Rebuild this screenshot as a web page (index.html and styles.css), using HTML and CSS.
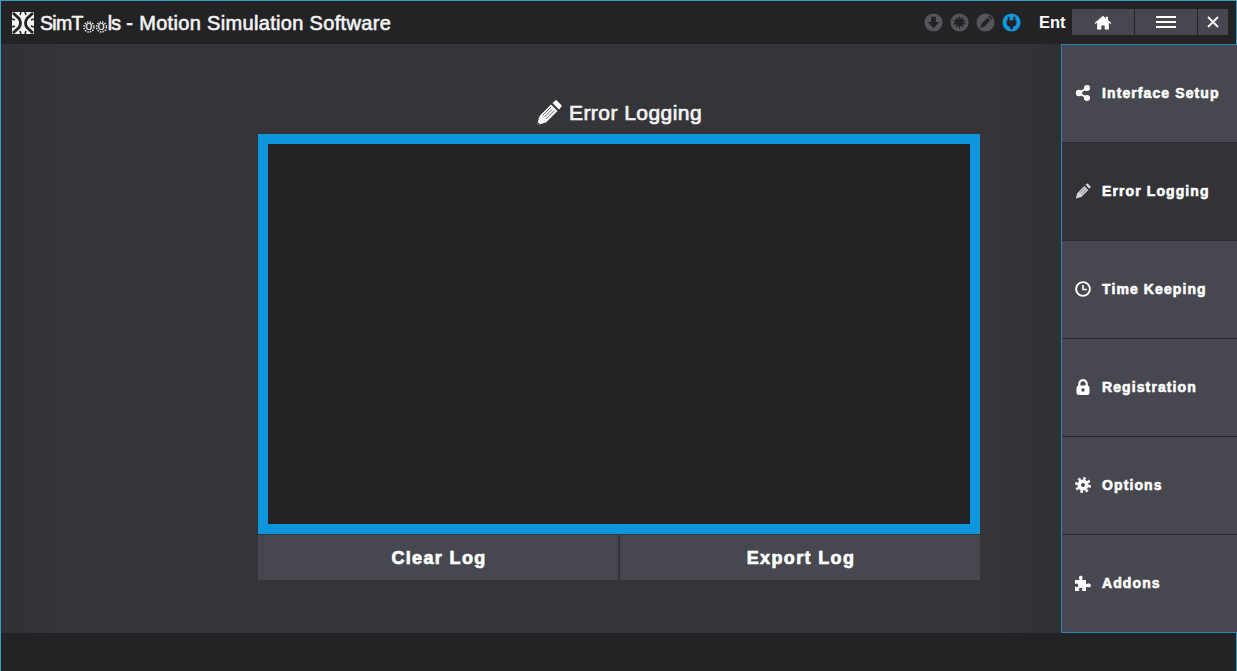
FILE: index.html
```html
<!DOCTYPE html>
<html lang="en">
<head>
<meta charset="utf-8">
<title>SimTools - Motion Simulation Software</title>
<link rel="stylesheet" href="styles.css">
</head>
<body>
<div class="app">
  <header class="titlebar">
    <svg class="logo" viewBox="0 0 22 22"><rect width="22" height="22" rx="1" fill="#f4f4f4"/><path d="M1 1l6 5.500Q10 11 7 15.500L1 21M21 1l-6 5.500Q12 11 15 15.500L21 21" fill="none" stroke="#232325" stroke-width="2.800"/><path d="M3 8l-3-1M3 14l-3 1M19 8l3-1M19 14l3 1M8 3l1-3M14 3l-1-3M8 19l1 3M14 19l-1 3" stroke="#232325" stroke-width="1.600"/></svg>
    <h1 class="app-title"><span class="brand">SimT<span class="gears">oo<svg class="gear-teeth" viewBox="0 0 25 12"><circle cx="6" cy="6" r="5" fill="none" stroke="#f4f4f4" stroke-width="1.500" stroke-dasharray="1.400 1.220"/><circle cx="18.500" cy="6" r="5" fill="none" stroke="#f4f4f4" stroke-width="1.500" stroke-dasharray="1.400 1.220"/></svg></span>ls</span> - Motion Simulation Software</h1>
    <div class="status">
      <svg class="status-icon" viewBox="0 0 20 20"><circle cx="10" cy="10" r="9.500" fill="#55565b"/><path d="M7.500 4h5v5.500H16L10 16 4 9.500h3.500z" fill="#232325"/></svg>
      <svg class="status-icon" viewBox="0 0 20 20"><circle cx="10" cy="10" r="9.500" fill="#55565b"/><path d="M10 3l1.300 3.200L14 4l-.5 3.500L17 7l-2.300 2.500L17 12l-3.300-.2.300 3.700-2.700-2.300L10 17l-1.300-3.800L6 15.500l.3-3.700L3 12l2.300-2.500L3 7l3.500.5L6 4l2.700 2.200z" fill="#232325"/></svg>
      <svg class="status-icon" viewBox="0 0 20 20"><circle cx="10" cy="10" r="9.500" fill="#55565b"/><path d="M4.500 15.500l1-4L12 5l3 3-6.500 6.500zM13 4l1.300-1.300 3 3L16 7z" fill="#232325"/></svg>
      <svg class="status-icon" viewBox="0 0 20 20"><circle cx="10" cy="10" r="9.500" fill="#0f97e0"/><path d="M6 4h2v3.500h4V4h2v3.500h1.200v3c0 2.200-1.500 3.700-3.700 4V17h-3v-2.500c-2.200-.3-3.700-1.800-3.700-4v-3H6z" fill="#232325"/></svg>
    </div>
    <span class="edition">Ent</span>
    <nav class="window-buttons">
      <button class="win-btn win-home" aria-label="Home"><svg class="win-icon-home" viewBox="0 0 20 18"><path d="M10 1L0 9.500l1 1.200L3 9v8.500h5v-5h4v5h5V9l2 1.700 1-1.200-4-3.400V2h-2.500v2L10 1z" fill="#fff"/></svg></button>
      <button class="win-btn win-menu" aria-label="Menu"><svg class="win-icon-menu" viewBox="0 0 20 12"><path d="M0 0h20v2H0zM0 5h20v2H0zM0 10h20v2H0z" fill="#fff"/></svg></button>
      <button class="win-btn win-close" aria-label="Close"><svg class="win-icon-close" viewBox="0 0 12 12"><path d="M1 1l10 10M11 1L1 11" stroke="#fff" stroke-width="1.800" fill="none"/></svg></button>
    </nav>
  </header>
  <div class="body-row">
    <main class="content">
      <h2 class="page-title"><svg class="page-icon" viewBox="0 0 26 26"><path d="M1 25l2.500-9L15 4.500l6.500 6.500L10 22.500z" fill="#fff"/><path d="M16.500 3L19 .8c.6-.6 1.400-.6 2 0l4.200 4.200c.6.600.6 1.400 0 2L23 9.500z" fill="#fff"/><path d="M6.500 15.500L15 7M8.200 17.200L16.700 8.700M9.900 18.900L18.400 10.400" stroke="#333338" stroke-width=".8" fill="none"/><path d="M1 25l.8-3 2.200 2.200z" fill="#333338"/></svg>Error Logging</h2>
      <div class="log-box"></div>
      <div class="log-actions">
        <button class="action">Clear Log</button>
        <button class="action">Export Log</button>
      </div>
    </main>
    <aside class="sidebar">
      <a class="side-item"><svg class="side-icon" viewBox="0 0 16 16"><path d="M12 3L4 8l8 5" stroke="#fff" stroke-width="2" fill="none"/><circle cx="12" cy="3" r="3" fill="#fff"/><circle cx="4" cy="8" r="3.200" fill="#fff"/><circle cx="12" cy="13" r="3" fill="#fff"/></svg>Interface Setup</a>
      <a class="side-item active"><svg class="side-icon" viewBox="0 0 16 16"><path d="M.8 15.500l1.500-5.500L9.300 3l4 4-7 7z" fill="#d4d4d4"/><path d="M10.500 1.800L11.700.8c.4-.4.900-.4 1.300 0l2.400 2.400c.4.400.4.900 0 1.300l-1 1.200z" fill="#d4d4d4"/><path d="M4.800 9.800L9.600 5M6.400 11.400L11.200 6.600" stroke="#323237" stroke-width=".6"/></svg>Error Logging</a>
      <a class="side-item"><svg class="side-icon" viewBox="0 0 16 16"><circle cx="8" cy="8" r="6.900" fill="none" stroke="#fff" stroke-width="1.900"/><path d="M8 4v4.500h3.800" fill="none" stroke="#fff" stroke-width="1.600"/></svg>Time Keeping</a>
      <a class="side-item"><svg class="side-icon" viewBox="0 0 16 16"><path d="M4.300 7V4.800a3.700 3.700 0 0 1 7.400 0V7" fill="none" stroke="#fff" stroke-width="2.200"/><rect x="1.500" y="6.500" width="13" height="9.500" rx="2.500" fill="#fff"/><circle cx="8" cy="11" r="1.700" fill="#47484f"/></svg>Registration</a>
      <a class="side-item"><svg class="side-icon" viewBox="0 0 16 16"><circle cx="8" cy="8" r="3.800" fill="none" stroke="#fff" stroke-width="3.600"/><circle cx="8" cy="8" r="6.600" fill="none" stroke="#fff" stroke-width="2.800" stroke-dasharray="2.600 2.580"/></svg>Options</a>
      <a class="side-item"><svg class="side-icon" viewBox="0 0 16 16"><path d="M0 5h4c.7 0 .6-.7.300-1.100C3.700 3.200 3.800.800 5.800.800S7.900 3.200 7.300 3.900C7 4.300 6.900 5 7.600 5H11v3.700c0 .5.600.6 1 .2.700-.6 4-.7 4 1.500s-3.300 2.100-4 1.500c-.4-.4-1-.3-1 .2V16H7.500c-.7 0-.6-.7-.3-1.100.5-.7.300-2.200-1.500-2.200S3.700 14.200 4.200 14.900c.3.400.4 1.100-.3 1.100H0v-4c0-.7.700-.6 1.100-.3.700.5 2.100.4 2.100-1.300S1.800 8.200 1.100 8.700C.7 9 0 9.100 0 8.400z" fill="#fff"/></svg>Addons</a>
    </aside>
  </div>
  <footer class="statusbar"></footer>
</div>
</body>
</html>
```
FILE: styles.css
```css
* { box-sizing: border-box; }
html, body { margin: 0; padding: 0; height: 100%; background: #232325; }
body { overflow: hidden; font-family: "Liberation Sans", Arial, sans-serif; color: #fff; }
.app { width: 1237px; height: 671px; display: flex; flex-direction: column; border: 1px solid #3a9cc4; border-bottom: 0; background: #232325; }
.titlebar { height: 43px; flex: none; display: flex; align-items: center; padding-left: 11px; }
.logo { width: 22px; height: 22px; flex: none; margin-top: 1px; }
.app-title { margin: 2px 0 0 6px; font-size: 20px; font-weight: 400; letter-spacing: .33px; color: #f4f4f4; -webkit-text-stroke: .6px #f4f4f4; white-space: nowrap; }
.brand { font-size: 19.500px; letter-spacing: -.7px; }
.gears { position: relative; display: inline-block; width: 25px; font-size: 13px; letter-spacing: 5px; padding-left: 2.500px; -webkit-text-stroke: 0; color: #f4f4f4; }
.gear-teeth { position: absolute; left: 0; top: 3px; width: 25px; height: 12px; }
.status { margin-left: auto; display: flex; gap: 7px; }
.status-icon { width: 19px; height: 19px; display: block; }
.edition { margin-left: 18px; font-size: 16.500px; font-weight: 700; width: 33px; }
.window-buttons { display: flex; gap: 1px; margin-right: 8px; margin-top: -1px; }
.win-btn { height: 26px; border: 0; padding: 0; background: #47484f; display: flex; align-items: center; justify-content: center; }
.win-home { width: 62px; }
.win-menu { width: 62px; }
.win-close { width: 30px; }
.win-icon-home { width: 18px; height: 15px; }
.win-icon-menu { width: 20px; height: 12px; }
.win-icon-close { width: 12px; height: 12px; }
.body-row { height: 589px; flex: none; display: flex; }
.content { width: 1060px; flex: none; background: linear-gradient(90deg, #313135, #343439 6%, #343439 94%, #303034); padding: 57px 0 0 257px; }
.page-title { width: 722px; height: 23px; margin: 0 0 10px; display: flex; align-items: center; justify-content: center; gap: 7px; font-size: 21px; font-weight: 400; letter-spacing: .45px; color: #f4f4f4; -webkit-text-stroke: .7px #f4f4f4; }
.page-icon { width: 26px; height: 26px; }
.log-box { width: 722px; height: 400px; border: 10px solid #0d95dd; background: #232326; }
.log-actions { width: 722px; height: 46px; display: flex; gap: 2px; padding-top: 1px; }
.action { flex: 1; border: 0; padding: 2px 0 0 2px; background: #47484f; color: #fff; font: 700 18px "Liberation Sans", Arial, sans-serif; letter-spacing: 1.350px; -webkit-text-stroke: .7px #fff; }
.sidebar { width: 176px; flex: none; display: flex; flex-direction: column; border: 1px solid #2a86b8; border-right: 0; background: #47484f; }
.side-item { height: 98px; flex: none; display: flex; align-items: center; gap: 11px; padding: 0 0 2px 13px; font-size: 14px; font-weight: 700; letter-spacing: 1.100px; -webkit-text-stroke: .6px #fff; color: #fff; border-bottom: 1px solid #2b2b2e; }
.side-item:last-child { border-bottom: 0; flex: 1; }
.side-item.active { background: #323237; }
.side-icon { width: 16px; height: 16px; flex: none; }
.statusbar { flex: 1; background: #232325; }
```
